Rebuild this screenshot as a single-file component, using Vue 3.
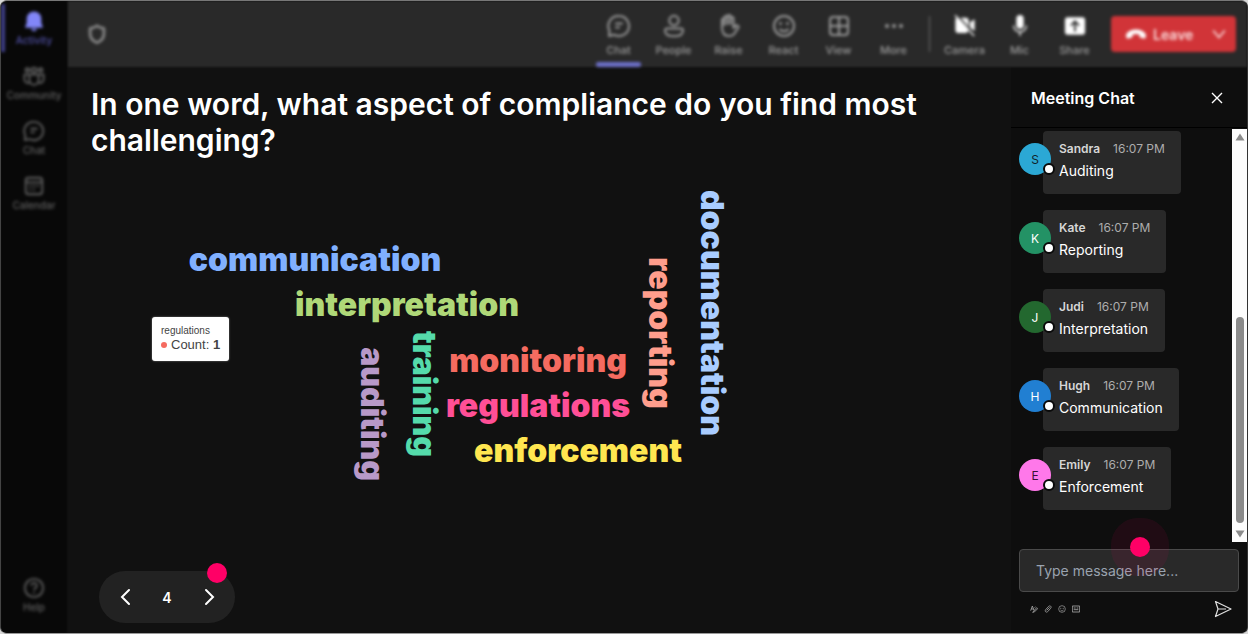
<script setup>
import { ref } from 'vue'

const navItems = [
  { label: 'Activity', icon: 'bell', active: true },
  { label: 'Community', icon: 'community' },
  { label: 'Chat', icon: 'chat' },
  { label: 'Calendar', icon: 'calendar' },
]

const viewTools = [
  { label: 'Chat', icon: 'chat', active: true },
  { label: 'People', icon: 'person' },
  { label: 'Raise', icon: 'hand' },
  { label: 'React', icon: 'smile' },
  { label: 'View', icon: 'grid' },
  { label: 'More', icon: 'more' },
]

const deviceTools = [
  { label: 'Camera', icon: 'camera' },
  { label: 'Mic', icon: 'mic' },
  { label: 'Share', icon: 'share' },
]

const words = [
  { text: 'communication', x: 248, y: 113, color: '#80b0ff' },
  { text: 'interpretation', x: 340, y: 158, color: '#afd878' },
  { text: 'monitoring', x: 471, y: 214, color: '#f56b60' },
  { text: 'regulations', x: 471, y: 259, color: '#ff4f96' },
  { text: 'enforcement', x: 511, y: 304, color: '#ffe650' },
  { text: 'auditing', x: 294, y: 256, color: '#b899c8', vertical: true },
  { text: 'training', x: 346, y: 236, color: '#55dbab', vertical: true },
  { text: 'reporting', x: 582, y: 175, color: '#ff9d8c', vertical: true },
  { text: 'documentation', x: 634, y: 155, color: '#a9ccff', vertical: true },
]

const messages = [
  { name: 'Sandra', text: 'Auditing', color: '#2ba8d5', ink: '#10242c' },
  { name: 'Kate', text: 'Reporting', color: '#239265', ink: '#ffffff' },
  { name: 'Judi', text: 'Interpretation', color: '#23682f', ink: '#ffffff' },
  { name: 'Hugh', text: 'Communication', color: '#217fd2', ink: '#ffffff' },
  { name: 'Emily', text: 'Enforcement', color: '#ff78ea', ink: '#3a1034' },
]

const draft = ref('')
const page = ref(4)
</script>

<template>
  <svg class="sprite" aria-hidden="true">
    <symbol id="bell" viewBox="0 0 24 24"><path fill="currentColor" d="M12 1.5a8 8 0 0 0-8 8v4.6L2.4 18.2c-.2.6.2 1.2.8 1.2h17.6c.6 0 1-.6.8-1.2L20 14.100V9.500a8 8 0 0 0-8-8zM8.600 20.500a3.500 3.500 0 0 0 6.800 0z" /></symbol>
    <symbol id="community" viewBox="0 0 24 24"><g fill="none" stroke="currentColor" stroke-width="2"><circle cx="12" cy="5.500" r="2.700" /><circle cx="4.800" cy="5.500" r="2" /><circle cx="19.200" cy="5.500" r="2" /><path d="M7 10.500h10v6a5 5 0 0 1-10 0zM7 10.500H1.500v5c0 3 2.500 4.500 5.500 4M17 10.500h5.500v5c0 3-2.500 4.500-5.500 4" /></g></symbol>
    <symbol id="chat" viewBox="0 0 24 24"><path fill="none" stroke="currentColor" stroke-width="2" stroke-linejoin="round" stroke-linecap="round" d="M12 2a10 10 0 1 1-4.700 18.800L2 22l.5-5.300A10 10 0 0 1 12 2zM9 9.500h6M9 13.500h3" /></symbol>
    <symbol id="calendar" viewBox="0 0 24 24"><g fill="none" stroke="currentColor" stroke-width="2"><rect x="3" y="3" width="18" height="18" rx="3" /><path d="M3 8h18M7 12h2M11 12h2M15 12h2M7 16h2M11 16h2" /></g></symbol>
    <symbol id="help" viewBox="0 0 24 24"><g fill="none" stroke="currentColor" stroke-width="2"><circle cx="12" cy="12" r="10" /><path d="M9 9.500a3 3 0 1 1 4.500 2.600c-1 .6-1.500 1-1.500 2.200M12 16v2" /></g></symbol>
    <symbol id="shield" viewBox="0 0 24 24"><path fill="none" stroke="currentColor" stroke-width="3" stroke-linejoin="round" d="M12 3c2.500 2 4.500 2.500 7.500 2.800V12c0 5-2.500 7.500-7.500 9.500-5-2-7.500-4.500-7.500-9.500V5.800C7.500 5.500 9.500 5 12 3z" /></symbol>
    <symbol id="person" viewBox="0 0 24 24"><g fill="none" stroke="currentColor" stroke-width="2"><circle cx="12" cy="6.500" r="4.700" /><path d="M5 14.500h14c1 0 2 .8 2 2 0 3.500-3.500 5.700-9 5.700s-9-2.200-9-5.700c0-1.200 1-2 2-2z" /></g></symbol>
    <symbol id="hand" viewBox="0 0 24 24"><path fill="none" stroke="currentColor" stroke-width="2" stroke-linejoin="round" d="M5 13V6c0-2 2.500-2 2.500 0v5V3.500c0-2 3-2 3 0V10 2.500c0-2 3-2 3 0V10 4.500c0-2 3-2 3 0V14l2-2c1.500-1.500 4 .3 2.700 2L17 20c-1 1.500-2.500 2-5 2-5 0-7-3-7-9z" /></symbol>
    <symbol id="smile" viewBox="0 0 24 24"><circle cx="12" cy="12" r="10" fill="none" stroke="currentColor" stroke-width="2" /><circle cx="8.500" cy="9.500" r="1.500" fill="currentColor" /><circle cx="15.500" cy="9.500" r="1.500" fill="currentColor" /><path d="M7.500 15c2.500 3 6.500 3 9 0" fill="none" stroke="currentColor" stroke-width="2" /></symbol>
    <symbol id="grid" viewBox="0 0 24 24"><path fill="none" stroke="currentColor" stroke-width="2" d="M6 3h12a3 3 0 0 1 3 3v12a3 3 0 0 1-3 3H6a3 3 0 0 1-3-3V6a3 3 0 0 1 3-3zM12 3v18M3 12h18" /></symbol>
    <symbol id="more" viewBox="0 0 24 24"><g fill="currentColor"><circle cx="5" cy="12" r="2" /><circle cx="12" cy="12" r="2" /><circle cx="19" cy="12" r="2" /></g></symbol>
    <symbol id="camera" viewBox="0 0 24 24"><path fill="currentColor" d="M4 3h9a3 3 0 0 1 3 3v10l-2 3.500H4a2.500 2.500 0 0 1-2.500-2.500V5.500A2.500 2.500 0 0 1 4 3zM17.500 8l5-3.500v13l-5-3.500z" /><path d="M4 1l18 20" stroke="#292929" stroke-width="2" /><path d="M1 0l21 23" stroke="currentColor" stroke-width="1.500" /></symbol>
    <symbol id="mic" viewBox="0 0 24 24"><rect x="8" y="0" width="8" height="15" rx="4" fill="currentColor" /><path d="M5 11.500a7 7 0 0 0 14 0M12 18.500V23" fill="none" stroke="currentColor" stroke-width="1.500" /></symbol>
    <symbol id="share" viewBox="0 0 24 24"><rect x="1" y="2.500" width="22" height="19" rx="3" fill="currentColor" /><path d="M12 18V7M7.500 11.500L12 7l4.500 4.500" fill="none" stroke="#292929" stroke-width="2" /></symbol>
    <symbol id="phone" viewBox="0 0 24 14"><path fill="currentColor" d="M12 2c5 0 9 2 10.500 5 .6 1.300.4 3-.1 4.200-.3.700-1 1-1.700.8l-3.700-1c-.7-.2-1.100-.8-1.200-1.500L15.500 7.500c-2-.8-5-.8-7 0L8.200 9.500C8.100 10.200 7.700 10.800 7 11l-3.700 1c-.7.2-1.400-.1-1.700-.8C1.100 10 .9 8.300 1.500 7 3 4 7 2 12 2z" /></symbol>
    <symbol id="chevron-down" viewBox="0 0 12 12"><path d="M1 3l5 6 5-6" fill="none" stroke="currentColor" stroke-width="1.500" /></symbol>
    <symbol id="chevron-left" viewBox="0 0 12 18"><path d="M10 2L3 9l7 7" fill="none" stroke="currentColor" stroke-width="2" stroke-linecap="round" /></symbol>
    <symbol id="chevron-right" viewBox="0 0 12 18"><path d="M3 2l7 7-7 7" fill="none" stroke="currentColor" stroke-width="2" stroke-linecap="round" /></symbol>
    <symbol id="close" viewBox="0 0 12 12"><path d="M1 1l10 10M11 1L1 11" fill="none" stroke="currentColor" stroke-width="1.400" /></symbol>
    <symbol id="format" viewBox="0 0 24 24"><path d="M2 17L7 3l5 13M4 12h7M8 22l12-14 3 3-10 10-5 1zM14 8l2-3" fill="none" stroke="currentColor" stroke-width="2.500" /></symbol>
    <symbol id="clip" viewBox="0 0 24 24"><path d="M5 14l9-10c4-4 10 1 6 6L11 20c-4 4-10-1-6-6zM8 16l9-9" fill="none" stroke="currentColor" stroke-width="2.500" /></symbol>
    <symbol id="gif" viewBox="0 0 24 24"><path d="M1 3h22v18H1zM5 9h6M14 9h5M5 14h14" fill="none" stroke="currentColor" stroke-width="2.500" /></symbol>
    <symbol id="send" viewBox="0 0 18 18"><path d="M1.500 1.500L17 9 1.500 16.500 4 9zM4 9h8" fill="none" stroke="currentColor" stroke-width="1.200" stroke-linejoin="round" /></symbol>
  </svg>

  <div class="window">
    <nav class="rail">
      <button v-for="item in navItems" :key="item.label" class="rail-item" :class="{ active: item.active }">
        <svg class="icon"><use :href="'#' + item.icon" /></svg>
        <span>{{ item.label }}</span>
      </button>
      <button class="rail-item help">
        <svg class="icon"><use href="#help" /></svg>
        <span>Help</span>
      </button>
    </nav>

    <div class="content">
      <header class="topbar">
        <svg class="shield"><use href="#shield" /></svg>
        <div class="tools">
          <button v-for="tool in viewTools" :key="tool.label" class="tool" :class="{ active: tool.active }">
            <svg class="icon"><use :href="'#' + tool.icon" /></svg>
            <span>{{ tool.label }}</span>
          </button>
        </div>
        <div class="divider"></div>
        <div class="tools devices">
          <button v-for="tool in deviceTools" :key="tool.label" class="tool">
            <svg class="icon"><use :href="'#' + tool.icon" /></svg>
            <span>{{ tool.label }}</span>
          </button>
        </div>
        <button class="leave">
          <svg class="phone"><use href="#phone" /></svg>
          <span>Leave</span>
          <svg class="caret"><use href="#chevron-down" /></svg>
        </button>
      </header>

      <div class="body">
        <main class="stage">
          <h1>In one word, what aspect of compliance do you find most challenging?</h1>
          <div class="cloud">
            <svg class="cloud-canvas">
              <text
                v-for="word in words"
                :key="word.text"
                :fill="word.color"
                text-anchor="middle"
                :transform="`translate(${word.x} ${word.y}) rotate(${word.vertical ? 90 : 0})`"
              >{{ word.text }}</text>
            </svg>
            <div class="tooltip">
              <div class="tooltip-title">regulations</div>
              <div class="tooltip-row"><i class="bullet"></i><span>Count: <b>1</b></span></div>
            </div>
          </div>
          <div class="pager">
            <button aria-label="Previous" @click="page--"><svg><use href="#chevron-left" /></svg></button>
            <span>{{ page }}</span>
            <button aria-label="Next" @click="page++"><svg><use href="#chevron-right" /></svg></button>
            <i class="hotspot"></i>
          </div>
        </main>

        <aside class="chat">
          <div class="chat-head">
            <h2>Meeting Chat</h2>
            <button aria-label="Close"><svg><use href="#close" /></svg></button>
          </div>
          <div class="chat-scroll">
            <ul class="messages">
              <li v-for="msg in messages" :key="msg.name">
                <div class="avatar" :style="{ background: msg.color, color: msg.ink }">
                  {{ msg.name[0] }}<i class="presence"></i>
                </div>
                <div class="bubble">
                  <div class="meta"><strong>{{ msg.name }}</strong><time>16:07 PM</time></div>
                  <p>{{ msg.text }}</p>
                </div>
              </li>
            </ul>
            <div class="scrollbar">
              <svg viewBox="0 0 10 8"><path d="M5 0.500L9.500 7.500h-9z" fill="#8b8b8b" /></svg>
              <div class="track"><div class="thumb"></div></div>
              <svg viewBox="0 0 10 8"><path d="M5 7.500L9.500 0.500h-9z" fill="#8b8b8b" /></svg>
            </div>
          </div>
          <div class="composer">
            <input v-model="draft" type="text" aria-label="Message" placeholder="Type message here..." />
            <i class="hotspot pulse"></i>
            <div class="composer-tools">
              <button aria-label="Format"><svg><use href="#format" /></svg></button>
              <button aria-label="Attach"><svg><use href="#clip" /></svg></button>
              <button aria-label="Emoji"><svg><use href="#smile" /></svg></button>
              <button aria-label="GIF"><svg><use href="#gif" /></svg></button>
              <button class="send" aria-label="Send"><svg><use href="#send" /></svg></button>
            </div>
          </div>
        </aside>
      </div>
    </div>
  </div>
</template>

<style>
body {
  background: #d8d8d8;
}
</style>

<style scoped>
* {
  box-sizing: border-box;
}

.sprite {
  position: absolute;
  width: 0;
  height: 0;
}

button {
  padding: 0;
  border: 0;
  background: none;
  color: inherit;
  font: inherit;
  cursor: pointer;
}

svg {
  display: block;
}

.window {
  display: flex;
  min-height: 100vh;
  border: 1px solid #5c5c5c;
  border-color: #777 #333 #999 #444;
  border-radius: 7px;
  overflow: hidden;
  background: #111;
  color: #fff;
  font-family: Inter, "Liberation Sans", sans-serif;
}

.rail {
  display: flex;
  flex-direction: column;
  flex: none;
  width: 66px;
  padding: 2px 0 8px;
  background: #080808;
  filter: blur(1px);
}

.rail-item {
  position: relative;
  display: flex;
  flex-direction: column;
  align-items: center;
  gap: 1px;
  height: 55px;
  padding-top: 7px;
  color: #626262;
  font-size: 10px;
  font-weight: 500;
  line-height: 14px;
  filter: blur(1px);
}

.rail-item.active {
  color: #5252a8;
}

.rail-item.active .icon {
  color: #8286f8;
}

.rail-item.active::before {
  content: "";
  position: absolute;
  left: 0;
  top: 1px;
  width: 4px;
  height: 48px;
  background: #40408a;
}

.rail-item .icon {
  width: 22px;
  height: 22px;
}

.help {
  margin-top: auto;
}

.content {
  display: flex;
  flex-direction: column;
  flex: 1;
  min-width: 0;
}

.topbar {
  display: flex;
  align-items: center;
  height: 66px;
  margin-left: 1px;
  padding: 0 11px 0 18px;
  background: #292929;
  filter: blur(1px);
}

.topbar > * {
  filter: blur(1px);
}

.shield {
  width: 22px;
  height: 22px;
  margin-right: auto;
  color: #8a8a8a;
}

.tools {
  display: flex;
  height: 66px;
}

.tool {
  position: relative;
  display: flex;
  flex-direction: column;
  align-items: center;
  gap: 5px;
  width: 55px;
  padding-top: 13px;
  color: #9c9c9c;
  font-size: 11px;
  font-weight: 500;
  line-height: 14px;
}

.tool .icon {
  width: 24px;
  height: 24px;
}

.tool.active::after {
  content: "";
  position: absolute;
  left: 5px;
  right: 5px;
  bottom: 0;
  height: 5px;
  border-radius: 2px;
  background: #6c6fc8;
}

.devices .icon {
  padding: 1px;
  color: #fff;
}

.divider {
  width: 1px;
  height: 36px;
  margin: 0 7px 0 8px;
  background: #707070;
}

.leave {
  display: flex;
  align-items: center;
  width: 125px;
  height: 36px;
  margin-left: 9px;
  padding: 0 10px 0 14px;
  border-radius: 4px;
  background: #d13438;
  color: #fbdcdc;
  font-size: 14px;
  font-weight: 600;
}

.phone {
  width: 22px;
  height: 14px;
  margin-right: 6px;
  color: #fff;
}

.caret {
  width: 14px;
  height: 14px;
  margin-left: auto;
}

.body {
  display: flex;
  flex: 1;
}

.stage {
  display: flex;
  flex-direction: column;
  flex: 1;
  min-width: 0;
  padding: 19px 0 10px;
}

h1 {
  margin: 0;
  padding: 0 48px 0 24px;
  font-size: 30px;
  font-weight: 600;
  line-height: 36px;
}

.cloud {
  position: relative;
  display: flex;
  flex: 1;
}

.cloud-canvas {
  width: 100%;
  overflow: visible;
  font-family: Inter, "Liberation Sans", sans-serif;
  font-size: 32px;
  font-weight: 900;
}

.tooltip {
  position: absolute;
  left: 85px;
  top: 159px;
  padding: 8px 9px;
  border-radius: 3px;
  background: #fff;
  box-shadow: 0 0 2px #888;
  color: #444;
  font-family: "Liberation Sans", Arial, sans-serif;
}

.tooltip-title {
  font-size: 10px;
  line-height: 12px;
}

.tooltip-row {
  display: flex;
  align-items: center;
  gap: 4px;
  font-size: 13px;
  line-height: 16px;
}

.bullet {
  width: 6px;
  height: 6px;
  border-radius: 50%;
  background: #f56b60;
}

.pager {
  position: relative;
  display: flex;
  align-items: center;
  justify-content: space-between;
  width: 136px;
  height: 52px;
  margin-left: 32px;
  padding: 0 18px;
  border-radius: 26px;
  background: #222;
  font-size: 14px;
  font-weight: 600;
}

.pager button {
  display: grid;
  place-items: center;
  width: 16px;
  height: 24px;
}

.pager svg {
  width: 12px;
  height: 18px;
}

.hotspot {
  position: absolute;
  top: -8px;
  right: 8px;
  width: 20px;
  height: 20px;
  border-radius: 50%;
  background: #ff0066;
}

.chat {
  display: flex;
  flex-direction: column;
  flex: none;
  width: 236px;
  background: #0e0e0e;
}

.chat-head {
  display: flex;
  align-items: center;
  justify-content: space-between;
  height: 61px;
  padding: 2px 24px 0 20px;
  border-bottom: 1px solid #000;
}

h2 {
  margin: 0;
  font-size: 16px;
  font-weight: 600;
}

.chat-head svg {
  width: 12px;
  height: 12px;
}

.chat-scroll {
  display: flex;
  flex: 1;
  padding-top: 1px;
}

.messages {
  display: flex;
  flex-direction: column;
  flex: 1;
  gap: 16px;
  margin: 0;
  padding: 2px 0 0 8px;
  list-style: none;
}

.messages li {
  display: flex;
  align-items: flex-start;
}

.avatar {
  position: relative;
  display: grid;
  place-items: center;
  width: 32px;
  height: 32px;
  margin: 12px -8px 0 0;
  border-radius: 50%;
  font-size: 12px;
}

.presence {
  position: absolute;
  right: -4px;
  bottom: 0;
  width: 12px;
  height: 12px;
  border: 2px solid #0a0a0a;
  border-radius: 50%;
  background: #fff;
}

.bubble {
  height: 63px;
  padding: 8px 16px;
  border-radius: 4px;
  background: #292929;
}

.meta {
  display: flex;
  gap: 13px;
  color: #d6d6d6;
  font-size: 12px;
  line-height: 20px;
}

.meta strong {
  font-weight: 600;
}

.meta time {
  color: #adadad;
}

.bubble p {
  margin: 2px 0 0;
  font-size: 14px;
  line-height: 20px;
}

.scrollbar {
  display: flex;
  flex-direction: column;
  align-items: center;
  width: 15px;
  padding: 4px 0;
  background: #fcfcfc;
}

.scrollbar svg {
  width: 10px;
  height: 8px;
}

.track {
  display: flex;
  flex-direction: column;
  justify-content: flex-end;
  flex: 1;
  padding-bottom: 7px;
}

.thumb {
  width: 8px;
  height: 54%;
  border-radius: 4px;
  background: #8b8b8b;
}

.composer {
  position: relative;
  padding: 7px 8px 15px;
}

.composer input {
  display: block;
  width: 100%;
  height: 43px;
  padding: 0 16px;
  border: 1px solid #4a4a4a;
  border-radius: 4px;
  background: #292929;
  color: #fff;
  font: 14px/20px Inter, "Liberation Sans", sans-serif;
}

.composer input::placeholder {
  color: #9aa3af;
  opacity: 1;
}

.hotspot.pulse {
  top: -5px;
  right: 97px;
  box-shadow: 0 0 0 19px rgba(255, 0, 102, 0.08);
  pointer-events: none;
}

.composer-tools {
  display: flex;
  align-items: center;
  gap: 6px;
  padding: 8px 7px 0 11px;
  color: #a8a8a8;
}

.composer-tools svg {
  width: 8px;
  height: 8px;
}

.composer-tools .send {
  margin-left: auto;
  color: #e0e0e0;
}

.composer-tools .send svg {
  width: 18px;
  height: 18px;
}
</style>
